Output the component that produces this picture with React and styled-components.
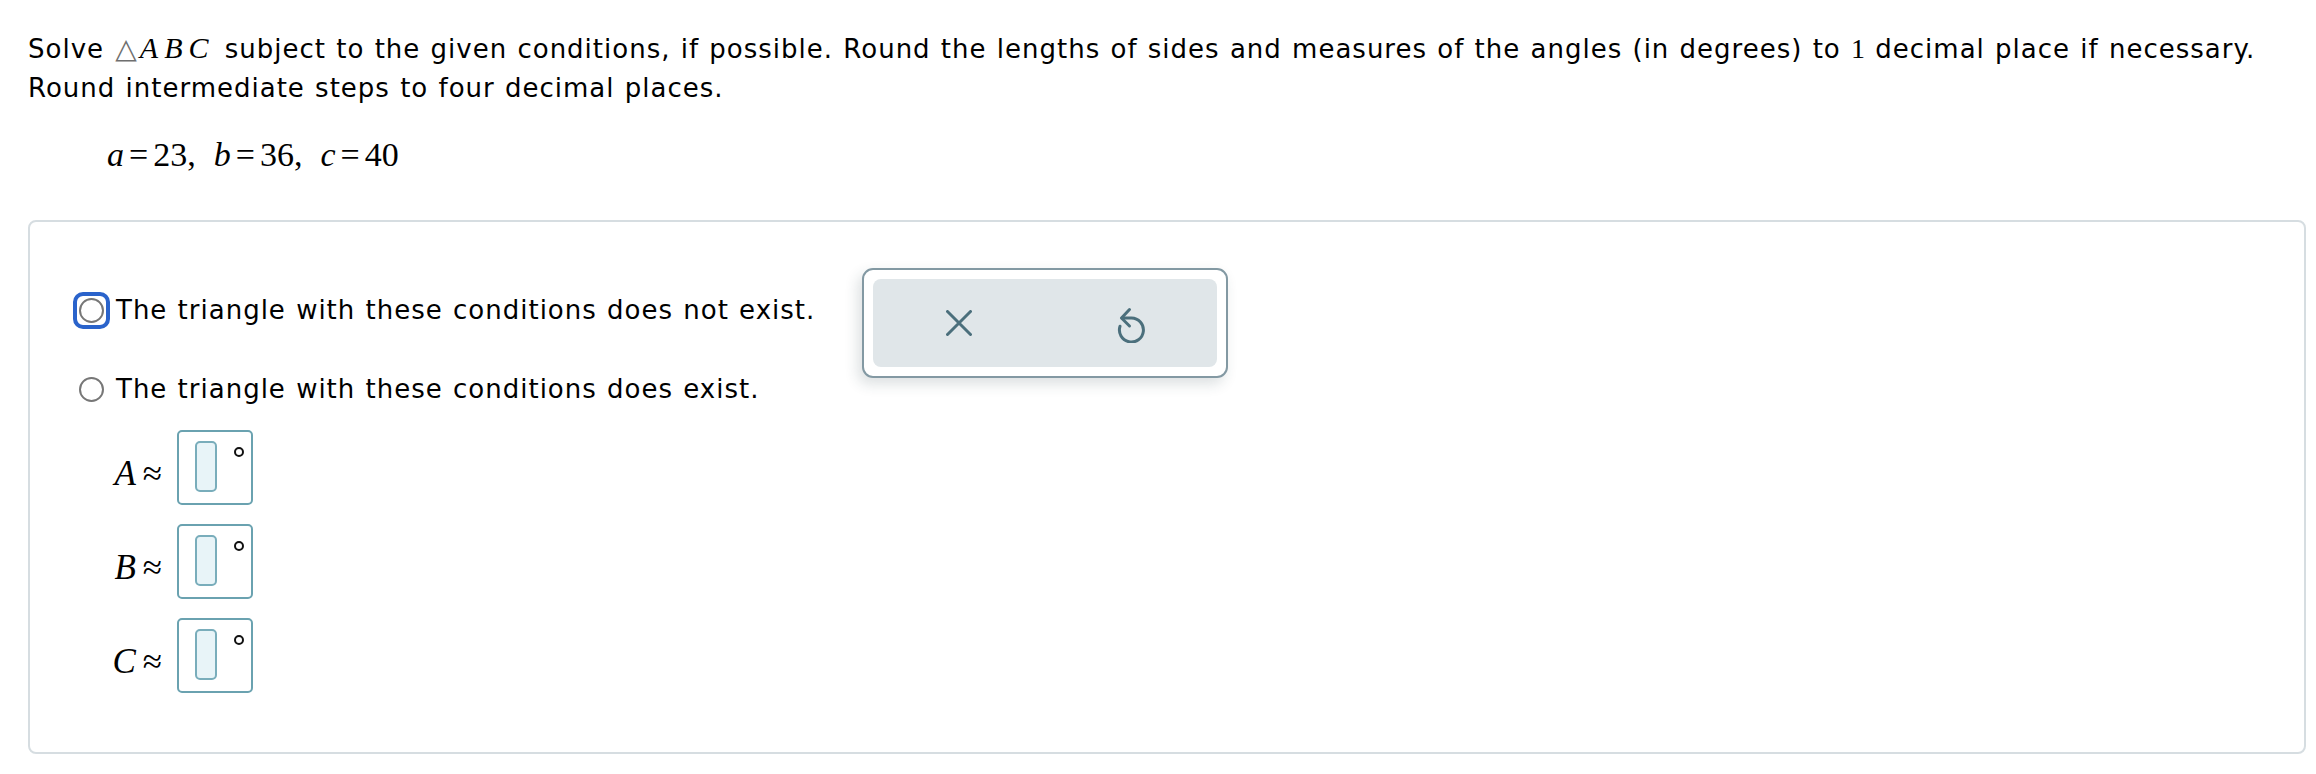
import React, { useState } from 'react';
import styled, { createGlobalStyle } from 'styled-components';

const GlobalStyle = createGlobalStyle`
  body {
    margin: 0;
    background: #ffffff;
    color: #000000;
    font-family: "DejaVu Sans", Verdana, sans-serif;
  }
`;

const Page = styled.div`
  padding: 28px 10px 20px 28px;
`;

const Prompt = styled.p`
  margin: 0;
  font-size: 26px;
  line-height: 39px;
  letter-spacing: 1px;
  word-spacing: 1px;
  white-space: nowrap;
`;

const Tri = styled.span`
  font-family: "DejaVu Sans", sans-serif;
  font-size: 28px;
  color: #6f6f6f;
  letter-spacing: 0;
  margin: 0 3px 0 1px;
`;

const MathVar = styled.span`
  font-family: "Liberation Serif", "Times New Roman", serif;
  font-style: italic;
  font-size: ${p => p.size || 26}px;
  letter-spacing: ${p => p.spread || 0}px;
`;

const MathNum = styled.span`
  font-family: "Liberation Serif", "Times New Roman", serif;
  font-size: ${p => p.size || 28}px;
  letter-spacing: 0;
`;

const Given = styled.div`
  margin: 27px 0 0 79px;
  font-family: "Liberation Serif", "Times New Roman", serif;
  font-size: 34px;
  line-height: 40px;
`;

const Eq = styled.span`
  margin: 0 5px;
`;

const Sep = styled.span`
  margin-right: 18px;
`;

const Panel = styled.div`
  margin: 45px 0 0 0;
  width: 2278px;
  box-sizing: border-box;
  border: 2px solid #d6dde1;
  border-radius: 8px;
  padding: 46px 0 59px 0;
  display: flex;
  align-items: flex-start;
`;

const Choices = styled.div`
  width: 832px;
  box-sizing: border-box;
  padding: 22px 0 0 43px;
  display: flex;
  flex-direction: column;
`;

const Option = styled.label`
  display: flex;
  align-items: center;
  gap: 6px;
  height: 40px;
  font-size: 26px;
  letter-spacing: 1px;
  word-spacing: 1px;
  white-space: nowrap;
  cursor: pointer;
  & + & {
    margin-top: 39px;
  }
`;

const RadioFrame = styled.span`
  flex: none;
  width: 37px;
  height: 37px;
  box-sizing: border-box;
  border: 4px solid ${p => (p.focused ? '#2a63cb' : 'transparent')};
  border-radius: 10px;
  display: flex;
  align-items: center;
  justify-content: center;
`;

const RadioDot = styled.span`
  width: 25px;
  height: 25px;
  box-sizing: border-box;
  border: 2px solid #777777;
  border-radius: 50%;
  background: #ffffff;
`;

const Angles = styled.div`
  margin-top: 21px;
  display: grid;
  grid-template-columns: 89px 76px;
  column-gap: 15px;
  row-gap: 19px;
  align-items: center;
`;

const AngleLabel = styled.div`
  justify-self: end;
  margin-top: 12px;
  font-family: "Liberation Serif", "Times New Roman", serif;
  font-size: 35px;
  line-height: 1;
  white-space: nowrap;
`;

const Approx = styled.span`
  margin-left: 7px;
  font-style: normal;
`;

const AnswerBox = styled.div`
  width: 76px;
  height: 75px;
  box-sizing: border-box;
  border: 2px solid #6aa2b0;
  border-radius: 5px;
  padding: 9px 0 0 16px;
  display: flex;
  align-items: flex-start;
`;

const Slot = styled.span`
  width: 22px;
  height: 51px;
  box-sizing: border-box;
  border: 2px solid #79adbb;
  border-radius: 5px;
  background: #e8f4f8;
`;

const Degree = styled.span`
  width: 10px;
  height: 10px;
  box-sizing: border-box;
  border: 2px solid #111111;
  border-radius: 50%;
  margin: 6px 0 0 17px;
`;

const Tools = styled.div`
  width: 366px;
  height: 110px;
  box-sizing: border-box;
  border: 2px solid #8399a3;
  border-radius: 11px;
  padding: 9px;
  background: #ffffff;
  box-shadow: -4px 6px 14px rgba(40, 60, 70, 0.16);
`;

const ToolTray = styled.div`
  height: 100%;
  display: flex;
  background: #e0e6e9;
  border-radius: 8px;
`;

const ToolButton = styled.button`
  flex: 1;
  display: flex;
  align-items: center;
  justify-content: center;
  border: none;
  background: transparent;
  padding: 0;
  cursor: pointer;
  color: #4b6f7c;
`;

const ClearIcon = () => (
  <svg width="26" height="26" viewBox="0 0 26 26" fill="none" stroke="currentColor" strokeWidth="3" strokeLinecap="round">
    <path d="M1.5 1.5 L24.5 24.5 M24.5 1.5 L1.5 24.5" />
  </svg>
);

const UndoIcon = () => (
  <svg width="40" height="40" viewBox="0 0 40 40" fill="none" stroke="currentColor" strokeWidth="3" strokeLinecap="round" strokeLinejoin="round">
    <path d="M9 23.3 A12 12 0 1 0 20.5 15 L11 15" />
    <path d="M18.5 6.5 L10.5 15 L18.5 23" />
  </svg>
);

const angles = ['A', 'B', 'C'];

export default function App() {
  const [choice, setChoice] = useState(null);

  return (
    <>
      <GlobalStyle />
      <Page>
        <Prompt>
          Solve <Tri>△</Tri><MathVar size={30} spread={6}>ABC</MathVar> subject to the given conditions, if possible. Round the lengths of sides and measures of the angles (in degrees) to <MathNum>1</MathNum> decimal place if necessary.
          <br />
          Round intermediate steps to four decimal places.
        </Prompt>
        <Given>
          <MathVar size={34}>a</MathVar><Eq>=</Eq>23<Sep>,</Sep>
          <MathVar size={34}>b</MathVar><Eq>=</Eq>36<Sep>,</Sep>
          <MathVar size={34}>c</MathVar><Eq>=</Eq>40
        </Given>
        <Panel>
          <Choices>
            <Option onClick={() => setChoice('none')}>
              <RadioFrame focused>
                <RadioDot />
              </RadioFrame>
              The triangle with these conditions does not exist.
            </Option>
            <Option onClick={() => setChoice('some')}>
              <RadioFrame>
                <RadioDot />
              </RadioFrame>
              The triangle with these conditions does exist.
            </Option>
            <Angles>
              {angles.map(name => (
                <React.Fragment key={name}>
                  <AngleLabel>
                    <MathVar size={35}>{name}</MathVar>
                    <Approx>≈</Approx>
                  </AngleLabel>
                  <AnswerBox>
                    <Slot />
                    <Degree />
                  </AnswerBox>
                </React.Fragment>
              ))}
            </Angles>
          </Choices>
          <Tools>
            <ToolTray>
              <ToolButton aria-label="Clear" onClick={() => setChoice(null)}>
                <ClearIcon />
              </ToolButton>
              <ToolButton aria-label="Undo">
                <UndoIcon />
              </ToolButton>
            </ToolTray>
          </Tools>
        </Panel>
      </Page>
    </>
  );
}
